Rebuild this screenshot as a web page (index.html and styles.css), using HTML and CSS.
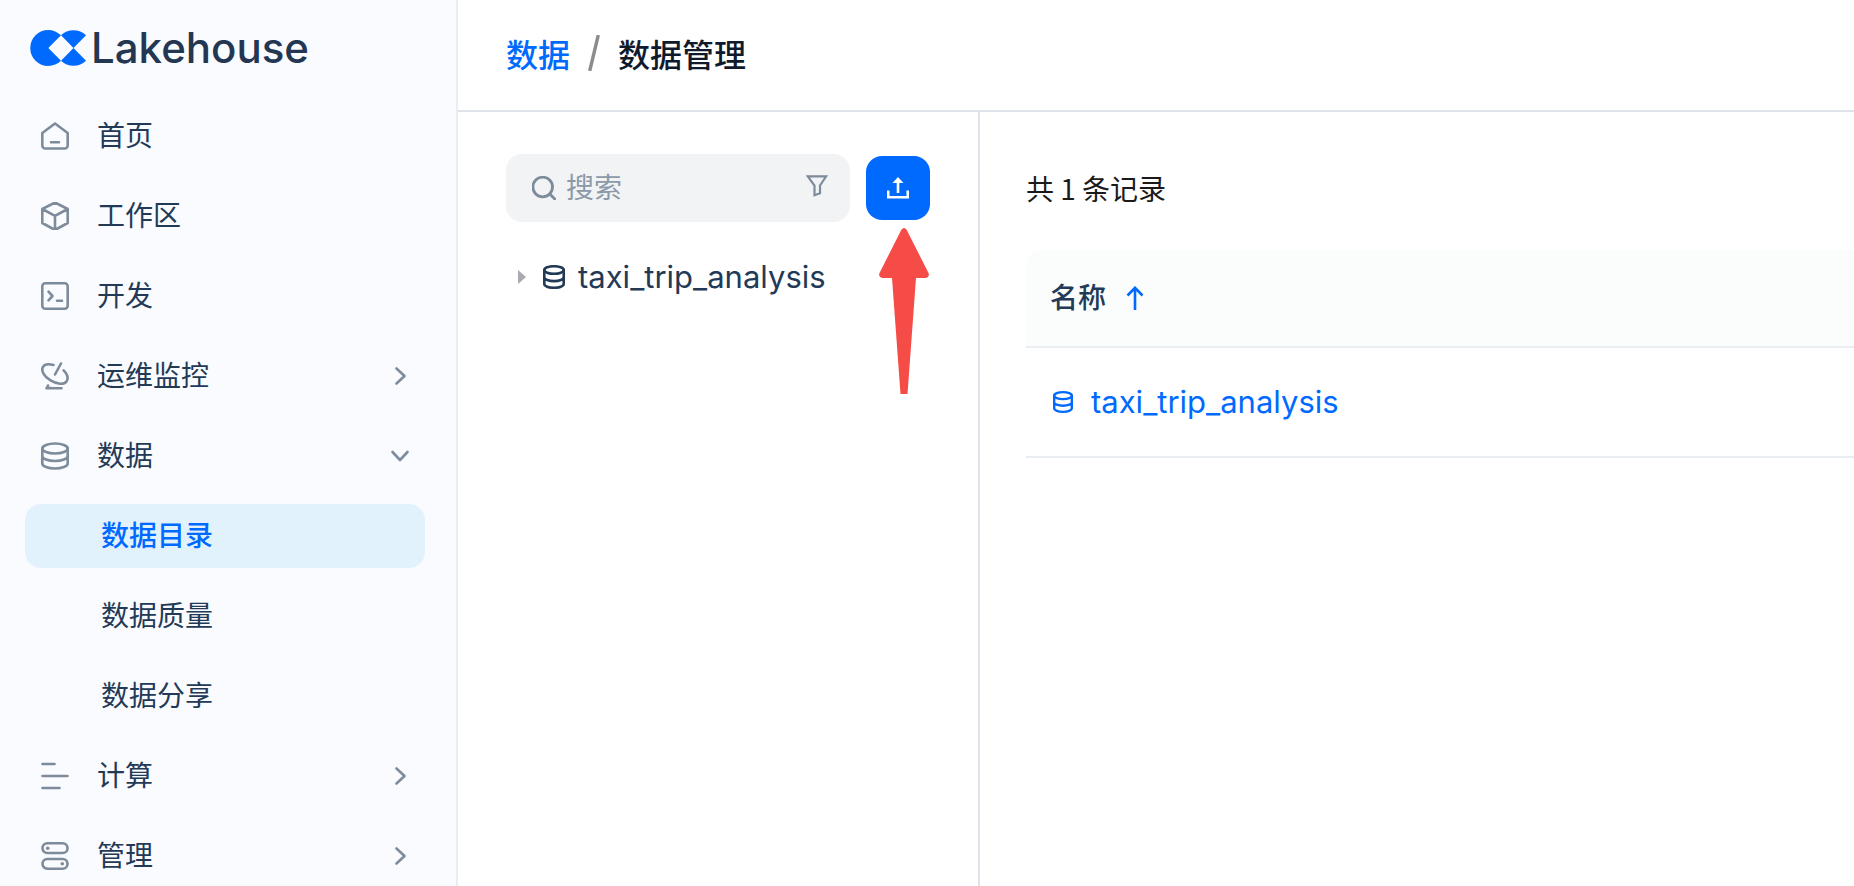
FILE: index.html
```html
<!DOCTYPE html>
<html lang="zh-CN">
<head>
<meta charset="utf-8">
<meta name="viewport" content="width=device-width, initial-scale=1">
<title>数据管理 - Lakehouse</title>
<link rel="stylesheet" href="styles.css">
</head>
<body>
<svg class="sprite" aria-hidden="true">
  <symbol id="i-db" viewBox="0 0 28 28">
    <ellipse cx="14" cy="6.500" rx="12.700" ry="5"/>
    <path d="M1.300 6.500v15c0 2.800 5.700 5 12.700 5s12.700-2.200 12.700-5v-15M1.300 14c0 2.800 5.700 5 12.700 5s12.700-2.200 12.700-5"/>
  </symbol>
  <symbol id="i-db-small" viewBox="0 0 22 24">
    <ellipse cx="11" cy="5" rx="9.700" ry="3.800"/>
    <path d="M1.300 5v14c0 2.100 4.300 3.800 9.700 3.800s9.700-1.700 9.700-3.800V5M1.300 12.300c0 2.100 4.300 3.800 9.700 3.800s9.700-1.700 9.700-3.800"/>
  </symbol>
  <symbol id="i-right" viewBox="0 0 20 20"><path d="M6.500 2.500l8 7.500-8 7.500"/></symbol>
  <symbol id="i-down" viewBox="0 0 20 20"><path d="M2.500 6l7.500 8 7.500-8"/></symbol>
</svg>
<div class="app">
  <aside class="sidebar">
    <a class="logo" href="#">
      <svg class="logo-mark" viewBox="0 0 56 36" aria-hidden="true">
        <path d="M31 5.300A18 18 0 1 0 31 30.700L18.300 18ZM31 5.300A18 18 0 0 1 56 5.300L43.500 18ZM31 30.700A18 18 0 0 0 56 30.700L43.500 18Z"/>
      </svg>
      <span>Lakehouse</span>
    </a>
    <nav class="nav">
      <a class="nav-item" href="#">
        <svg class="icon" viewBox="0 0 28 28"><path d="M14 1.500L26.700 11v12.500a3 3 0 0 1-3 3H4.300a3 3 0 0 1-3-3V11ZM10 20.300h8"/></svg>
        <span class="label">首页</span>
      </a>
      <a class="nav-item" href="#">
        <svg class="icon" viewBox="0 0 28 28"><path d="M14 .5L26.700 7v14L14 28 1.300 21V7ZM1.300 7L14 13.800 26.700 7M14 13.800V28"/></svg>
        <span class="label">工作区</span>
      </a>
      <a class="nav-item" href="#">
        <svg class="icon" viewBox="0 0 28 28"><rect x="1.300" y="1.300" width="25.400" height="25.400" rx="3"/><path d="M7.500 9.700l4 4.300-4 4.300M16 18.800h5"/></svg>
        <span class="label">开发</span>
      </a>
      <button class="nav-item" type="button">
        <svg class="icon" viewBox="0 0 28 28"><path d="M12.500 3C7.500 1.800 3.500 2.300 2 4.800c-2.200 3.700 1 9.700 7.500 13.600s13.500 4.500 16 1c2-2.900.8-7.200-2.900-11M20 1.500l-6 11M5.500 26.200h15M7 23.500l-1.200 2.500H10"/></svg>
        <span class="label">运维监控</span>
        <svg class="chevron"><use href="#i-right"/></svg>
      </button>
      <button class="nav-item" type="button" aria-expanded="true">
        <svg class="icon"><use href="#i-db"/></svg>
        <span class="label">数据</span>
        <svg class="chevron"><use href="#i-down"/></svg>
      </button>
      <a class="nav-item sub active" href="#" aria-current="page"><span class="label">数据目录</span></a>
      <a class="nav-item sub" href="#"><span class="label">数据质量</span></a>
      <a class="nav-item sub" href="#"><span class="label">数据分享</span></a>
      <button class="nav-item" type="button">
        <svg class="icon" viewBox="0 0 28 28"><path d="M1.500 2h12M1.500 14h25M1.500 26h17"/></svg>
        <span class="label">计算</span>
        <svg class="chevron"><use href="#i-right"/></svg>
      </button>
      <button class="nav-item" type="button">
        <svg class="icon" viewBox="0 0 28 28"><rect x="1.500" y="1.300" width="25" height="9.700" rx="4.800"/><rect x="1.500" y="17" width="25" height="9.700" rx="4.800"/><circle class="dot" cx="6.700" cy="6.200" r="1.800"/><circle class="dot" cx="21.300" cy="21.800" r="1.800"/></svg>
        <span class="label">管理</span>
        <svg class="chevron"><use href="#i-right"/></svg>
      </button>
    </nav>
  </aside>

  <main class="main">
    <header class="header">
      <nav class="breadcrumb" aria-label="面包屑">
        <a href="#">数据</a>
        <svg class="slash" viewBox="0 0 12 36" aria-hidden="true"><path d="M10.300 0L1.700 36"/></svg>
        <h1>数据管理</h1>
      </nav>
    </header>
    <div class="content">
      <section class="tree-pane">
        <div class="toolbar">
          <div class="search">
            <svg class="search-icon" viewBox="0 0 24 24" aria-hidden="true"><circle cx="10.700" cy="11" r="9.800"/><path d="M17.800 18l5.400 5.400"/></svg>
            <input type="text" placeholder="搜索" aria-label="搜索">
            <button class="filter" type="button" aria-label="筛选">
              <svg viewBox="0 0 22 22"><path d="M1.800 1.300h18.400L14 10.500v7.700l-5.500 2V10.500Z"/></svg>
            </button>
          </div>
          <div class="upload-wrap">
            <button class="upload" type="button" aria-label="上传">
              <svg viewBox="0 0 22 22"><path d="M1.200 13.500v6.800h19.600v-6.800M11 16V5"/><path class="tip" d="M11 0l5.500 6h-11Z"/></svg>
            </button>
            <svg class="pointer" viewBox="0 0 50 166" aria-hidden="true"><path d="M22.500 1.500q2.500-3 5 0L49.500 45q1.500 4-3 5H37l-8.500 116h-7L13 50H3.500q-4.500-1-3-5Z"/></svg>
          </div>
        </div>
        <div class="tree" role="tree">
          <div class="tree-node" role="treeitem" aria-expanded="false">
            <svg class="caret" viewBox="0 0 8 14"><path d="M0 0l8 7-8 7Z"/></svg>
            <svg class="tree-icon"><use href="#i-db-small"/></svg>
            <span class="latin">taxi_trip_analysis</span>
          </div>
        </div>
      </section>
      <section class="list-pane">
        <p class="count">共 1 条记录</p>
        <table class="table">
          <thead>
            <tr><th scope="col"><span class="cell"><span class="label">名称</span><svg class="sort" viewBox="0 0 18 24" aria-hidden="true"><path d="M9 24V2M1.500 9.500L9 1.800l7.500 7.700"/></svg></span></th></tr>
          </thead>
          <tbody>
            <tr><td><a class="cell link" href="#"><svg class="row-icon"><use href="#i-db-small"/></svg><span class="latin">taxi_trip_analysis</span></a></td></tr>
          </tbody>
        </table>
      </section>
    </div>
  </main>
</div>
</body>
</html>
```
FILE: styles.css
```css
:root {
  --blue: #006aff;
  --ink: #233a57;
  --muted: #7d8b9a;
  --line: #dfe4ea;
  --cjk: "Noto Sans CJK SC", sans-serif;
  --latin: Inter, "Noto Sans CJK SC", sans-serif;
}

* { box-sizing: border-box; }

body {
  margin: 0;
  background: #fff;
  color: var(--ink);
  font: 28px/40px var(--cjk);
}

a { color: inherit; text-decoration: none; }

button, input {
  border: 0;
  padding: 0;
  background: none;
  color: inherit;
  font: inherit;
}

button { cursor: pointer; }

svg {
  display: block;
  flex: none;
  fill: none;
  stroke: currentColor;
  stroke-width: 2.6;
  stroke-linecap: round;
  stroke-linejoin: round;
}

.sprite { position: absolute; width: 0; height: 0; }

/* Optical centring of CJK glyphs beside icons */
.label { padding-bottom: 4px; }

.app { display: flex; height: 100vh; overflow: hidden; }

/* Sidebar */
.sidebar {
  flex: 0 0 458px;
  overflow: hidden;
  border-right: 2px solid #eaedf2;
  background: #fafbff;
}

.logo {
  display: flex;
  align-items: center;
  gap: 5px;
  height: 104px;
  padding: 0 30px 8px;
  color: #233752;
  font: 500 42px/56px var(--latin);
}

.logo-mark { width: 56px; height: 36px; fill: var(--blue); stroke: none; }

.nav { display: flex; flex-direction: column; gap: 16px; padding: 0 31px 0 25px; }

.nav-item {
  display: flex;
  flex: none;
  align-items: center;
  gap: 28px;
  height: 64px;
  padding: 0 15px 0 16px;
  border-radius: 16px;
  text-align: left;
}

.icon { width: 28px; height: 28px; color: var(--muted); }
.icon .dot { fill: currentColor; stroke: none; }
.chevron { width: 20px; height: 20px; margin-left: auto; color: var(--muted); }
.sub { padding-left: 76px; }
.active { background: #e1f2fd; color: var(--blue); font-weight: 500; }

/* Main */
.main { display: flex; flex: 1; flex-direction: column; min-width: 0; }

.header {
  display: flex;
  align-items: center;
  height: 112px;
  padding: 0 48px 4px;
  border-bottom: 2px solid var(--line);
}

.breadcrumb {
  display: flex;
  align-items: center;
  gap: 18px;
  color: var(--blue);
  font-size: 32px;
  font-weight: 500;
}

.breadcrumb h1 { margin: 0; color: #0f1b2d; font: inherit; }
.slash { width: 12px; height: 36px; color: #8c8c8c; stroke-width: 3.4; stroke-linecap: butt; }

.content { display: flex; flex: 1; }

.tree-pane {
  flex: 0 0 522px;
  min-width: 0;
  padding: 42px 48px;
  border-right: 2px solid var(--line);
}

.toolbar { display: flex; align-items: center; gap: 16px; }

.search {
  display: flex;
  flex: 1;
  align-items: center;
  gap: 10px;
  min-width: 0;
  height: 68px;
  padding: 0 22px 0 26px;
  border-radius: 16px;
  background: #f1f3f5;
  color: var(--muted);
}

.search input { flex: 1; width: 0; min-width: 0; height: 44px; padding-bottom: 4px; outline: 0; }
.search input::placeholder { color: #8c99a8; opacity: 1; }
.search-icon { width: 24px; height: 24px; stroke-width: 2.8; }
.filter svg { width: 22px; height: 22px; margin-bottom: 4px; stroke-width: 2.2; stroke-linejoin: miter; }

.upload-wrap { position: relative; }

.upload {
  display: grid;
  place-items: center;
  width: 64px;
  height: 64px;
  border-radius: 16px;
  background: var(--blue);
  color: #fff;
}

.upload svg { width: 22px; height: 22px; stroke-linecap: butt; stroke-linejoin: miter; }
.upload .tip { fill: currentColor; stroke: none; }

.pointer {
  position: absolute;
  top: 72px;
  left: 13px;
  width: 50px;
  height: 166px;
  fill: #f64c48;
  stroke: none;
}

.tree { padding-top: 34px; }
.tree-node { display: flex; align-items: center; height: 42px; padding-left: 12px; }
.caret { width: 8px; height: 14px; margin-right: 17px; fill: #aaabb0; stroke: none; }
.tree-icon { width: 22px; height: 24px; margin-right: 13px; }
.latin { font-family: var(--latin); font-size: 31px; }

.list-pane { flex: 1; min-width: 0; padding: 56px 0 0 46px; }
.count { margin: 0; color: #1a1a1a; }

.table { width: 100%; margin-top: 42px; border-collapse: separate; border-spacing: 0; }
.table th, .table td { padding: 0 24px; border-bottom: 2px solid #eaeef2; text-align: left; }
.table th { height: 98px; border-top-left-radius: 16px; background: #fafdfc; font-weight: 500; }
.table td { height: 110px; }
.cell { display: flex; align-items: center; }
.sort { width: 18px; height: 24px; margin-left: 20px; color: var(--blue); stroke-linecap: butt; stroke-linejoin: miter; }
.link { color: var(--blue); }
.row-icon { width: 20px; height: 22px; margin: 0 18px 0 3px; }
```
